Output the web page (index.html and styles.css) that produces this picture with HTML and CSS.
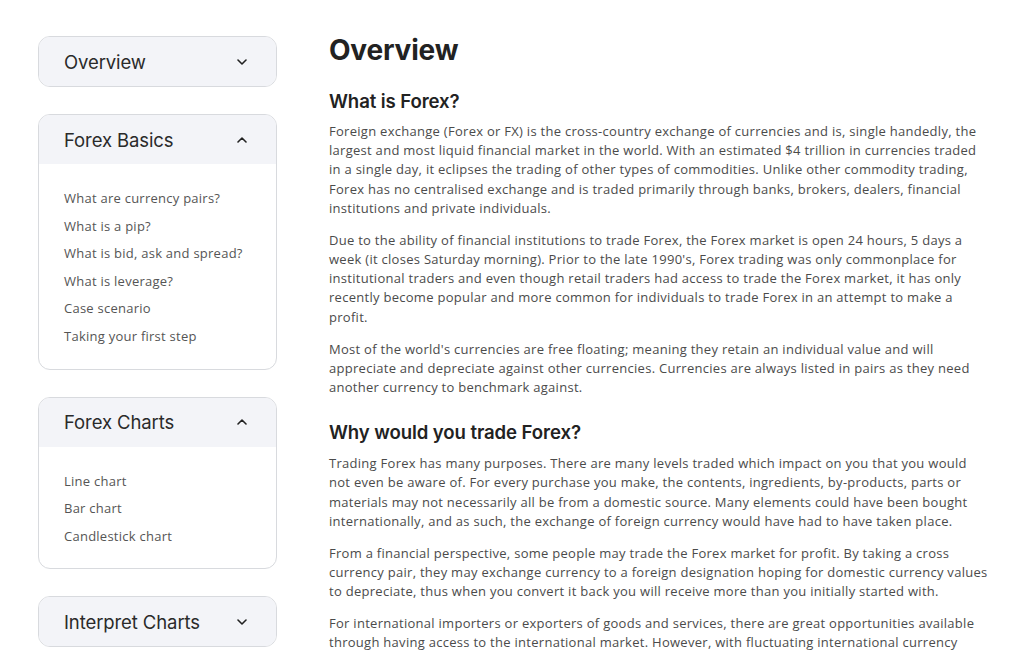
FILE: index.html
```html
<!DOCTYPE html>
<html lang="en">
<head>
<meta charset="utf-8">
<title>Overview</title>
<link rel="stylesheet" href="styles.css">
</head>
<body>
<div class="page">
  <aside class="sidebar">
    <div class="card">
      <div class="card-head">
        <span class="card-title">Overview</span>
        <svg class="chev" viewBox="0 0 10 6" width="10" height="6"><path d="M1 1l4 4 4-4" fill="none" stroke="#222" stroke-width="1.6" stroke-linecap="round" stroke-linejoin="round"/></svg>
      </div>
    </div>
    <div class="card">
      <div class="card-head open">
        <span class="card-title">Forex Basics</span>
        <svg class="chev" viewBox="0 0 10 6" width="10" height="6"><path d="M1 5l4-4 4 4" fill="none" stroke="#222" stroke-width="1.6" stroke-linecap="round" stroke-linejoin="round"/></svg>
      </div>
      <ul class="card-links">
        <li>What are currency pairs?</li>
        <li>What is a pip?</li>
        <li>What is bid, ask and spread?</li>
        <li>What is leverage?</li>
        <li>Case scenario</li>
        <li>Taking your first step</li>
      </ul>
    </div>
    <div class="card">
      <div class="card-head open">
        <span class="card-title">Forex Charts</span>
        <svg class="chev" viewBox="0 0 10 6" width="10" height="6"><path d="M1 5l4-4 4 4" fill="none" stroke="#222" stroke-width="1.6" stroke-linecap="round" stroke-linejoin="round"/></svg>
      </div>
      <ul class="card-links">
        <li>Line chart</li>
        <li>Bar chart</li>
        <li>Candlestick chart</li>
      </ul>
    </div>
    <div class="card">
      <div class="card-head">
        <span class="card-title">Interpret Charts</span>
        <svg class="chev" viewBox="0 0 10 6" width="10" height="6"><path d="M1 1l4 4 4-4" fill="none" stroke="#222" stroke-width="1.6" stroke-linecap="round" stroke-linejoin="round"/></svg>
      </div>
    </div>
  </aside>
  <main class="content">
    <h1>Overview</h1>
    <h2>What is Forex?</h2>
    <p>Foreign exchange (Forex or FX) is the cross-country exchange of currencies and is, single handedly, the largest and most liquid financial market in the world. With an estimated $4 trillion in currencies traded in a single day, it eclipses the trading of other types of commodities. Unlike other commodity trading, Forex has no centralised exchange and is traded primarily through banks, brokers, dealers, financial institutions and private individuals.</p>
    <p>Due to the ability of financial institutions to trade Forex, the Forex market is open 24 hours, 5 days a week (it closes Saturday morning). Prior to the late 1990's, Forex trading was only commonplace for institutional traders and even though retail traders had access to trade the Forex market, it has only recently become popular and more common for individuals to trade Forex in an attempt to make a profit.</p>
    <p>Most of the world's currencies are free floating; meaning they retain an individual value and will appreciate and depreciate against other currencies. Currencies are always listed in pairs as they need another currency to benchmark against.</p>
    <h2 class="h2-second">Why would you trade Forex?</h2>
    <p>Trading Forex has many purposes. There are many levels traded which impact on you that you would not even be aware of. For every purchase you make, the contents, ingredients, by-products, parts or materials may not necessarily all be from a domestic source. Many elements could have been bought internationally, and as such, the exchange of foreign currency would have had to have taken place.</p>
    <p>From a financial perspective, some people may trade the Forex market for profit. By taking a cross currency pair, they may exchange currency to a foreign designation hoping for domestic currency values to depreciate, thus when you convert it back you will receive more than you initially started with.</p>
    <p>For international importers or exporters of goods and services, there are great opportunities available through having access to the international market. However, with fluctuating international currency values, there is also a risk that can affect the profitability of a business.</p>
  </main>
</div>
</body>
</html>
```

FILE: styles.css
```css
html, body {
  margin: 0;
  padding: 0;
  background: #ffffff;
}

body {
  font-family: "Open Sans", "Liberation Sans", sans-serif;
  color: #4b4b4b;
  overflow: hidden;
}

.page {
  display: flex;
  align-items: flex-start;
  gap: 52px;
  padding: 36px 0 0 38px;
}

.sidebar {
  width: 239px;
  flex: none;
  display: flex;
  flex-direction: column;
  gap: 27px;
}

.card {
  border: 1px solid #d8dade;
  border-radius: 12px;
  overflow: hidden;
  background: #ffffff;
}

.card-head {
  height: 49px;
  display: flex;
  align-items: center;
  justify-content: space-between;
  padding: 0 29px 0 25px;
  background: #f3f4f8;
}

.card-title {
  font-family: "Inter", "Liberation Sans", sans-serif;
  font-size: 18.5px;
  font-weight: 400;
  color: #2a2a2a;
  letter-spacing: -0.1px;
}

.chev {
  display: block;
}

.card-links {
  list-style: none;
  margin: 0;
  padding: 21px 25px 18px;
}

.card-links li {
  font-size: 13px;
  line-height: 27.6px;
  color: #555555;
  letter-spacing: 0.25px;
}

.content {
  width: 660px;
  flex: none;
}

h1 {
  font-family: "Inter", "Liberation Sans", sans-serif;
  font-size: 28px;
  font-weight: 700;
  line-height: 36px;
  margin: -4px 0 19px;
  color: #222222;
  letter-spacing: -0.2px;
}

h2 {
  font-family: "Inter", "Liberation Sans", sans-serif;
  font-size: 18.6px;
  font-weight: 600;
  line-height: 28px;
  margin: 0 0 7px;
  color: #222222;
  letter-spacing: -0.1px;
}

.h2-second {
  margin-top: 21px;
  margin-bottom: 8px;
}

p {
  font-size: 13px;
  line-height: 19.2px;
  margin: 0 0 12.8px;
  letter-spacing: 0.28px;
}
```
